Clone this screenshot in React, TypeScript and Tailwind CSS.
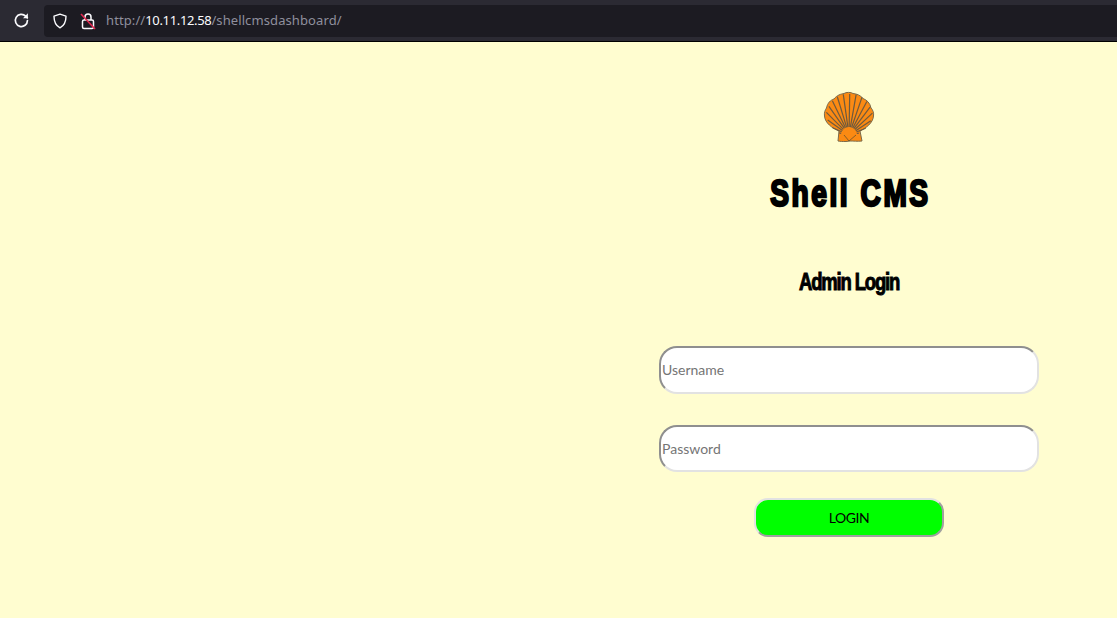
import React from "react";

function Shell() {
  const cx = 26;
  const cy = 44;
  const ribs: [number, number][] = [
    [-78, 10], [-66, 18], [-55, 26], [-45, 32], [-35, 35], [-26, 38], [-17, 40], [-8, 41],
    [1, 41], [10, 41], [19, 40], [28, 38], [37, 35], [47, 32], [57, 26], [68, 18], [79, 10],
  ];
  return (
    <svg width="52" height="52" viewBox="0 0 52 52" className="block">
      <path
        d="M15 50 L16 40 C9 37 2 32 1.5 25 C1 22 2 19 3.5 17 C4.5 12 7.5 9 11 8 C14 4 18 3 21 2.5 C23 1 28 1 30 2.5 C34 3 37 4 40 7.5 C44 9 47 12 48 17 C50 19 51 22 50.5 25 C50 32 43 37 37 40 L39 50 C34 50.5 31 50 27 50 L23 50.5 C20 50.5 17 50.5 15 50 Z"
        fill="#fb8a13"
        stroke="#7a6a4a"
        strokeWidth="1"
      />
      {ribs.map(([a, len]) => {
        const r = (a * Math.PI) / 180;
        return (
          <line
            key={a}
            x1={cx + Math.sin(r) * 8}
            y1={cy - Math.cos(r) * 8}
            x2={cx + Math.sin(r) * len}
            y2={cy - Math.cos(r) * len}
            stroke="#6e5a3e"
            strokeWidth="1.2"
          />
        );
      })}
      <path d="M19 43 L26 37 L33 43 L26 48 Z" fill="#fb8a13" />
      <path d="M21 44 L26 50 L33 44" fill="none" stroke="#5a4a2c" strokeWidth="0.7" />
    </svg>
  );
}

export default function App() {
  return (
    <div className="flex h-[618px] w-[1117px] flex-col overflow-hidden bg-[#fffdd0] font-['Noto_Sans','Open_Sans',sans-serif]">
      <div className="flex h-[42px] shrink-0 items-center border-b border-black bg-[#2b2a33]">
        <div className="flex w-[42px] shrink-0 justify-center">
          <svg width="17" height="17" viewBox="0 0 16 16" fill="none" stroke="#fbfbfe" strokeWidth="1.6">
            <path d="M13.6 8a5.7 5.7 0 1 1-1.7-4.1L13.5 5.5" strokeLinecap="round" />
            <path d="M14 1.2v4.6H9.4" fill="#fbfbfe" stroke="none" />
          </svg>
        </div>
        <div className="ml-[2px] flex h-[32px] flex-1 items-center rounded-l bg-[#1c1b22]">
          <svg width="16" height="16" viewBox="0 0 16 16" fill="none" stroke="#fbfbfe" strokeWidth="1.4" className="ml-2">
            <path d="M8 1.2 14 3.2C14 9 12.5 12.5 8 14.8 3.5 12.5 2 9 2 3.2Z" strokeLinejoin="round" />
          </svg>
          <svg width="16" height="18" viewBox="0 0 16 18" fill="none" className="ml-[12px]">
            <path d="M5 8V5a3 3 0 0 1 6 0v3" stroke="#fbfbfe" strokeWidth="1.5" />
            <rect x="2.5" y="8" width="11" height="8.5" rx="1.5" stroke="#fbfbfe" strokeWidth="1.5" />
            <path d="M1 2 15 17" stroke="#e22850" strokeWidth="1.6" />
          </svg>
          <div className="ml-[10px] text-[13px] leading-none tracking-[0.1px] text-[#8f8f9d]">
            http://<span className="tracking-[-0.35px] text-[#fbfbfe]">10.11.12.58</span>/shellcmsdashboard/
          </div>
        </div>
      </div>
      <div className="flex flex-1 justify-end">
        <div className="flex w-[536px] flex-col items-center pt-[49px]">
          <Shell />
          <h1 className="mt-[29px] scale-x-[0.78] pl-[4px] font-['Liberation_Sans',sans-serif] text-[36px] leading-[44px] font-bold tracking-[3.3px] text-black [-webkit-text-stroke:2.5px_black]">
            Shell CMS
          </h1>
          <h2 className="mt-[51px] scale-x-[0.77] font-['Liberation_Sans',sans-serif] text-[24px] leading-[30px] font-bold tracking-[-1.5px] text-black [-webkit-text-stroke:1px_black]">
            Admin Login
          </h2>
          <input
            placeholder="Username"
            className="mt-[49px] h-[48px] w-[380px] rounded-[18px] border-2 border-t-[#8f8f8f] border-r-[#e2e2e2] border-b-[#e2e2e2] border-l-[#8f8f8f] bg-white px-[1px] pb-[1px] font-['Lato',sans-serif] text-[14px] text-black outline-none placeholder:text-[#757575]"
          />
          <input
            placeholder="Password"
            type="password"
            className="mt-[31px] h-[47px] w-[380px] rounded-[18px] border-2 border-t-[#8f8f8f] border-r-[#e2e2e2] border-b-[#e2e2e2] border-l-[#8f8f8f] bg-white px-[1px] font-['Lato',sans-serif] text-[14px] text-black outline-none placeholder:text-[#757575]"
          />
          <button className="mt-[26px] h-[39px] w-[190px] rounded-[14px] border-2 border-t-[#e2e2e2] border-r-[#a0a0a0] border-b-[#a0a0a0] border-l-[#e2e2e2] bg-[#00ff00] font-['Lato',sans-serif] text-[14px] tracking-[-0.5px] text-black">
            LOGIN
          </button>
        </div>
      </div>
    </div>
  );
}
